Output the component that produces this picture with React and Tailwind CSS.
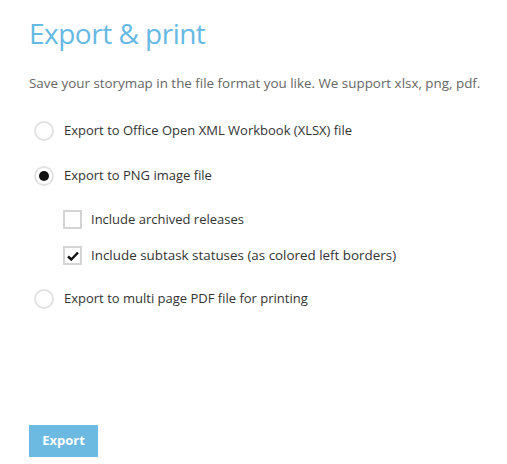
import React from 'react';

function Radio({ checked }) {
  return (
    <span className="flex h-[20px] w-[20px] shrink-0 items-center justify-center rounded-full border-2 border-[#e2e2e2] bg-white">
      {checked && <span className="h-[10px] w-[10px] rounded-full bg-[#111]" />}
    </span>
  );
}

function Checkbox({ checked }) {
  return (
    <span className="flex h-[19px] w-[19px] shrink-0 items-center justify-center border-2 border-[#d4d4d4] bg-white">
      {checked && (
        <svg width="12" height="10" viewBox="0 0 12 10">
          <path d="M1 5.5 L4.3 8.5 L11 1.5" fill="none" stroke="#111" strokeWidth="2.4" />
        </svg>
      )}
    </span>
  );
}

export default function App() {
  return (
    <div className="h-[464px] w-[507px] bg-white px-[29px] pt-[15px] text-[#555] font-['Open_Sans',sans-serif] flex flex-col">
      <h1 className="text-[28px] leading-[36px] tracking-[-0.5px] text-[#65b9e3]">Export &amp; print</h1>
      <p className="mt-[23px] text-[13.4px] leading-[18px] text-[#666] whitespace-nowrap">
        Save your storymap in the file format you like. We support xlsx, png, pdf.
      </p>

      <div className="mt-[28px] flex flex-col text-[13px] text-[#333]">
        <label className="flex h-[22px] items-center gap-[10px] pl-[5px]">
          <Radio />
          <span>Export to Office Open XML Workbook (XLSX) file</span>
        </label>
        <label className="mt-[23px] flex h-[22px] items-center gap-[10px] pl-[5px]">
          <Radio checked />
          <span>Export to PNG image file</span>
        </label>
        <div className="mt-[23px] flex flex-col gap-[17px] pl-[34px]">
          <label className="flex h-[19px] items-center gap-[9px]">
            <Checkbox />
            <span>Include archived releases</span>
          </label>
          <label className="flex h-[19px] items-center gap-[9px] text-[13.4px]">
            <Checkbox checked />
            <span>Include subtask statuses (as colored left borders)</span>
          </label>
        </div>
        <label className="mt-[23px] flex h-[22px] items-center gap-[10px] pl-[5px]">
          <Radio />
          <span>Export to multi page PDF file for printing</span>
        </label>
      </div>

      <div className="mt-auto mb-[7px]">
        <button className="h-[32px] w-[69px] bg-[#6cbae2] text-[13px] font-bold text-white">Export</button>
      </div>
    </div>
  );
}
